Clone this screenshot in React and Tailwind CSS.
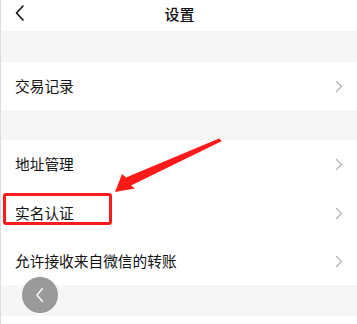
import React from "react";

const Chevron = () => (
  <svg width="8" height="13" viewBox="0 0 8 13" fill="none">
    <path d="M1.5 1.5 L6.5 6.5 L1.5 11.5" stroke="#b3b3b3" strokeWidth="1.3" strokeLinecap="round" strokeLinejoin="round" />
  </svg>
);

const Row = ({ label, h }) => (
  <div className={`flex items-center justify-between bg-white pl-[14px] pr-[14px] ${h}`}>
    <span className="text-[14.7px] text-[#111]">{label}</span>
    <Chevron />
  </div>
);

export default function App() {
  return (
    <div
      className="relative w-[357px] h-[324px] overflow-hidden bg-white border-l border-[#dcdcdc]"
      style={{ fontFamily: '"Noto Sans CJK SC", "Noto Sans", sans-serif' }}
    >
      <div className="relative flex h-[31px] items-center justify-center bg-white pb-[3px]">
        <svg className="absolute left-[13px] top-[5px]" width="12" height="16" viewBox="0 0 12 16" fill="none">
          <path d="M9 1 L2.5 8 L9 15" stroke="#111" strokeWidth="1.6" strokeLinecap="round" strokeLinejoin="round" />
        </svg>
        <span className="text-[15px] font-medium text-[#111] ml-[1px]">设置</span>
      </div>
      <div className="h-[31px] bg-[#f6f6f6]" />
      <Row label="交易记录" h="h-[48px]" />
      <div className="h-[30px] bg-[#f6f6f6]" />
      <Row label="地址管理" h="h-[49px]" />
      <Row label="实名认证" h="h-[48px]" />
      <Row label="允许接收来自微信的转账" h="h-[48px]" />
      <div className="h-[31px] bg-[#f6f6f6]" />
      <div className="h-[8px] bg-white" />

      {/* annotation box */}
      <div className="absolute left-[2px] top-[193px] h-[32px] w-[109px] rounded-[3px] border-[3px] border-[#ff1a1a]" />
      {/* annotation arrow */}
      <svg className="absolute left-0 top-0" width="357" height="324" viewBox="0 0 357 324">
        <polygon
          points="114,192 121,174 125,177.5 218,138.5 221,141 130,185.5 134,188.5"
          fill="#ff1a1a"
        />
      </svg>

      {/* floating back button */}
      <div className="absolute left-[21px] top-[277px] flex h-[36px] w-[36px] items-center justify-center rounded-full bg-[#9a9a9a]">
        <svg width="10" height="16" viewBox="0 0 10 16" fill="none">
          <path d="M7.5 1.5 L2 8 L7.5 14.5" stroke="#fff" strokeWidth="1.3" strokeLinecap="round" strokeLinejoin="round" />
        </svg>
      </div>
    </div>
  );
}
